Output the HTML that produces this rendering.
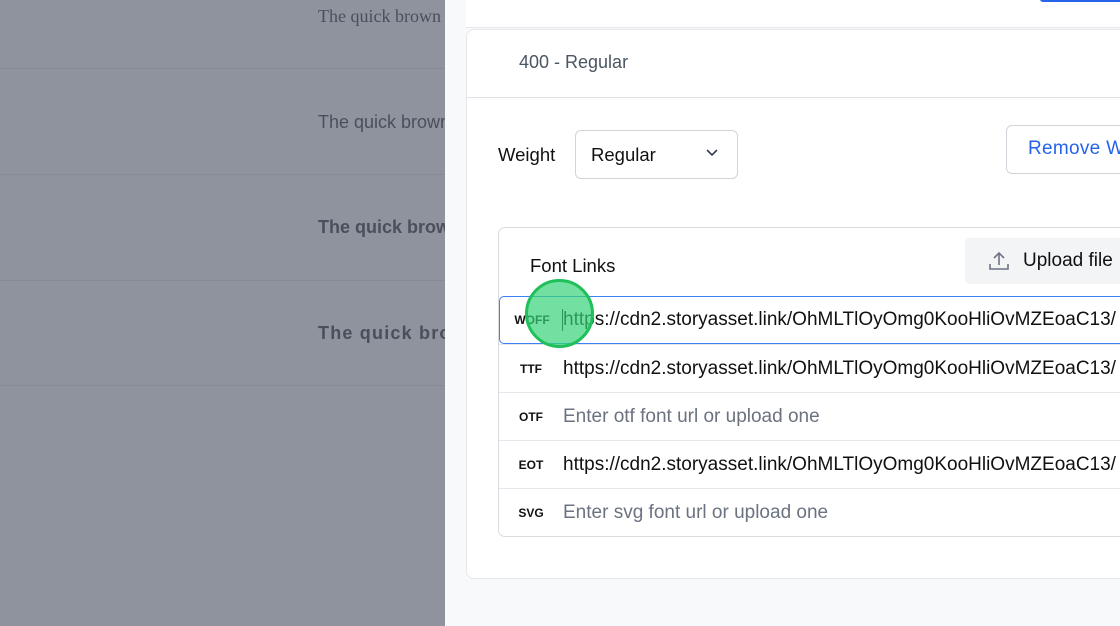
<!DOCTYPE html>
<html><head><style>
*{margin:0;padding:0;box-sizing:border-box}
body{width:1120px;height:626px;overflow:hidden;position:relative;font-family:"Liberation Sans",sans-serif;background:#8f939e}
.a{position:absolute;white-space:nowrap}
.hl{position:absolute;left:0;width:445px;height:1px;background:#878b96}
.q{position:absolute;left:318px;color:#4b4f5b;font-size:18px;white-space:nowrap}
.row{position:absolute;left:499px;width:640px;height:48px;border-top:1px solid #e5e7eb;display:flex;align-items:center;z-index:2}
.lb{width:64px;text-align:center;font-size:12px;font-weight:bold;color:#111}
.tx{font-size:19px;color:#111}
.ph{font-size:19px;color:#6b7280}
</style></head><body>
<div class="q" style="top:6px;font-family:'Liberation Serif',serif;font-size:18px">The quick brown fox</div>
<div class="hl" style="top:68px"></div>
<div class="q" style="top:112px">The quick brown fox</div>
<div class="hl" style="top:174px"></div>
<div class="q" style="top:217px;font-weight:bold">The quick brown fox</div>
<div class="hl" style="top:280px"></div>
<div class="q" style="top:323px;font-weight:bold;letter-spacing:1.2px">The quick brown fox</div>
<div class="hl" style="top:385px"></div>

<div class="a" style="left:445px;top:0;width:675px;height:626px;background:#f8f9fb;overflow:hidden;z-index:1">
  <div class="a" style="left:21px;top:-10px;width:700px;height:38px;background:#fff;border-bottom:1px solid #e5e7eb"></div>
  <div class="a" style="left:595px;top:-4px;width:100px;height:6px;background:#2563eb;border-radius:4px"></div>
  <div class="a" style="left:21px;top:29px;width:700px;height:550px;background:#fff;border:1px solid #e5e7eb;border-radius:8px"></div>
  <div class="a" style="left:21px;top:97px;width:700px;height:1px;background:#e0e2e6"></div>
  <div class="a" style="left:74px;top:52px;font-size:18px;color:#4b5563">400 - Regular</div>
  <div class="a" style="left:53px;top:144px;font-size:18.5px;color:#111">Weight</div>
  <div class="a" style="left:130px;top:130px;width:163px;height:49px;border:1px solid #d1d5db;border-radius:6px"></div>
  <div class="a" style="left:146px;top:144px;font-size:18.5px;color:#111">Regular</div>
  <svg class="a" style="left:260px;top:148px" width="14" height="10" viewBox="0 0 14 10"><path d="M2 2l5 5 5-5" fill="none" stroke="#374151" stroke-width="1.6"/></svg>
  <div class="a" style="left:561px;top:125px;width:200px;height:49px;border:1px solid #d1d5db;border-radius:6px"></div>
  <div class="a" style="left:583px;top:138px;font-size:19px;letter-spacing:0.3px;color:#2563eb">Remove Weight</div>
  <div class="a" style="left:53px;top:227px;width:700px;height:310px;border:1px solid #d8dbe0;border-radius:7px"></div>
  <div class="a" style="left:85px;top:255px;font-size:18.5px;color:#111">Font Links</div>
  <div class="a" style="left:520px;top:238px;width:200px;height:46px;background:#f3f4f6;border-radius:4px"></div>
  <svg class="a" style="left:543px;top:250px" width="22" height="22" viewBox="0 0 22 22"><path d="M11 15V3M6 8l5-5 5 5M2 14v5h18v-5" fill="none" stroke="#6b7280" stroke-width="1.6"/></svg>
  <div class="a" style="left:578px;top:250px;font-size:19px;color:#111">Upload file</div>
</div>

<div class="row" style="top:392px"><div class="lb">OTF</div><div class="ph">Enter otf font url or upload one</div></div>
<div class="row" style="top:344px"><div class="lb">TTF</div><div class="tx">https://cdn2.storyasset.link/OhMLTlOyOmg0KooHliOvMZEoaC13/</div></div>
<div class="row" style="top:440px"><div class="lb">EOT</div><div class="tx">https://cdn2.storyasset.link/OhMLTlOyOmg0KooHliOvMZEoaC13/</div></div>
<div class="row" style="top:488px;height:48px"><div class="lb">SVG</div><div class="ph">Enter svg font url or upload one</div></div>
<div class="row" style="top:296px;border:1px solid #3b82f6;border-radius:5px 0 0 5px"><div class="lb">WOFF</div><div class="tx" style="border-left:1px solid #111;margin-left:-2px">https://cdn2.storyasset.link/OhMLTlOyOmg0KooHliOvMZEoaC13/</div></div>
<div class="a" style="left:525px;top:279px;width:69px;height:69px;border-radius:50%;background:rgba(52,211,120,0.7);border:3px solid #1fc05a;z-index:3"></div>
</body></html>
